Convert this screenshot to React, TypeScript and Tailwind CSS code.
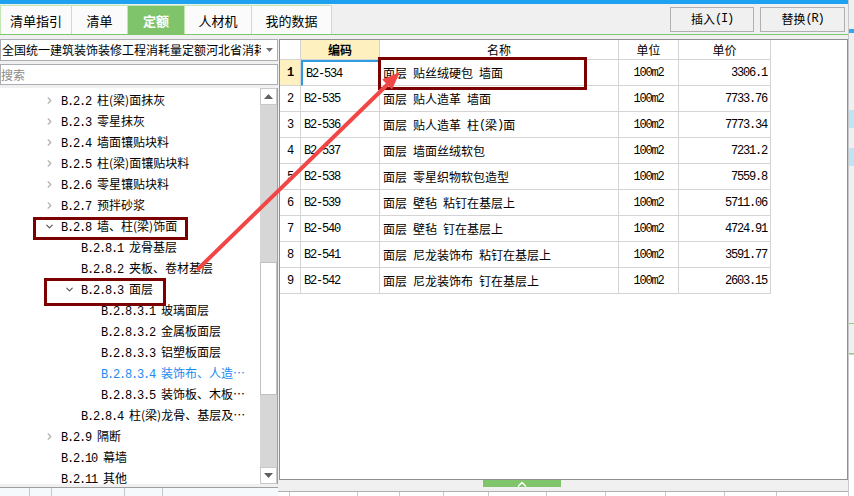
import { ChevronDown, ChevronRight } from "lucide-react"

interface Node {
  lvl: number
  code: string
  name: string
  arrow?: "right" | "down"
  active?: boolean
}

const tree: Node[] = [
  { lvl: 1, code: "B.2.2", name: "柱(梁)面抹灰", arrow: "right" },
  { lvl: 1, code: "B.2.3", name: "零星抹灰", arrow: "right" },
  { lvl: 1, code: "B.2.4", name: "墙面镶贴块料", arrow: "right" },
  { lvl: 1, code: "B.2.5", name: "柱(梁)面镶贴块料", arrow: "right" },
  { lvl: 1, code: "B.2.6", name: "零星镶贴块料", arrow: "right" },
  { lvl: 1, code: "B.2.7", name: "预拌砂浆", arrow: "right" },
  { lvl: 1, code: "B.2.8", name: "墙、柱(梁)饰面", arrow: "down" },
  { lvl: 2, code: "B.2.8.1", name: "龙骨基层" },
  { lvl: 2, code: "B.2.8.2", name: "夹板、卷材基层" },
  { lvl: 2, code: "B.2.8.3", name: "面层", arrow: "down" },
  { lvl: 3, code: "B.2.8.3.1", name: "玻璃面层" },
  { lvl: 3, code: "B.2.8.3.2", name: "金属板面层" },
  { lvl: 3, code: "B.2.8.3.3", name: "铝塑板面层" },
  { lvl: 3, code: "B.2.8.3.4", name: "装饰布、人造…", active: true },
  { lvl: 3, code: "B.2.8.3.5", name: "装饰板、木板…" },
  { lvl: 2, code: "B.2.8.4", name: "柱(梁)龙骨、基层及…" },
  { lvl: 1, code: "B.2.9", name: "隔断", arrow: "right" },
  { lvl: 1, code: "B.2.10", name: "幕墙" },
  { lvl: 1, code: "B.2.11", name: "其他" },
]

const rows = [
  ["B2-534", "面层 贴丝绒硬包 墙面", "100m2", "3306.1"],
  ["B2-535", "面层 贴人造革 墙面", "100m2", "7733.76"],
  ["B2-536", "面层 贴人造革 柱(梁)面", "100m2", "7773.34"],
  ["B2-537", "面层 墙面丝绒软包", "100m2", "7231.2"],
  ["B2-538", "面层 零星织物软包造型", "100m2", "7559.8"],
  ["B2-539", "面层 壁毡 粘钉在基层上", "100m2", "5711.06"],
  ["B2-540", "面层 壁毡 钉在基层上", "100m2", "4724.91"],
  ["B2-541", "面层 尼龙装饰布 粘钉在基层上", "100m2", "3591.77"],
  ["B2-542", "面层 尼龙装饰布 钉在基层上", "100m2", "2603.15"],
]

const tabs = ["清单指引", "清单", "定额", "人材机", "我的数据"]
const tabW = ["w-[72px]", "w-[56px]", "w-[57px]", "w-[67px]", "w-[80px]"]

// ascii runs get a narrow mono face so they sit at half the width of a CJK glyph
function T({ s }: { s: string }) {
  const parts = s.match(/[\x20-\x7e]+|[^\x20-\x7e]+/g) || []
  return (
    <>
      {parts.map((p, i) =>
        /[\x20-\x7e]/.test(p[0]) ? (
          <span key={i} className="font-['Liberation_Mono',monospace] text-[12px] tracking-[-1.2px] whitespace-pre">
            {p}
          </span>
        ) : (
          <span key={i}>{p}</span>
        )
      )}
    </>
  )
}

function Tri({ up }: { up?: boolean }) {
  return (
    <svg width="9" height="5" viewBox="0 0 9 5">
      <polygon points={up ? "0,5 9,5 4.5,0" : "0,0 9,0 4.5,5"} fill="#606060" />
    </svg>
  )
}

export default function App() {
  return (
    <div className="relative w-[854px] h-[496px] overflow-hidden bg-[#f0f0f0] flex font-['Noto_Sans_CJK_SC',sans-serif] text-[12px] leading-none text-black">
      <div className="w-[848px] flex flex-col">
        {/* top accent */}
        <div className="h-[4px] bg-[#1ea1ee]" />

        {/* tabs + buttons */}
        <div className="h-[31px] flex items-stretch border-b border-[#7fc56a] pt-[1px]">
          {tabs.map((t, i) => (
            <div
              key={t}
              className={`${tabW[i]} flex items-center justify-center text-[13px] border-t border-r border-[#c2e6b4] ${i === 0 ? "border-l" : ""} ${
                i === 2 ? "bg-[#7fc46a] text-white font-bold" : "bg-[#fbfbfb]"
              }`}
            >
              {t}
            </div>
          ))}
          <div className="ml-auto flex items-center gap-[6px] pr-[3px] pb-[1px]">
            <div className="w-[84px] h-[25px] border border-[#b0b0b0] bg-[#f0f0f0] flex items-center justify-center">
              <T s="插入(I)" />
            </div>
            <div className="w-[85px] h-[25px] border border-[#b0b0b0] bg-[#f0f0f0] flex items-center justify-center">
              <T s="替换(R)" />
            </div>
          </div>
        </div>

        <div className="h-[452px] flex">
          {/* left panel */}
          <div className="w-[278px] flex flex-col pt-[4px]">
            <div className="h-[22px] bg-white border border-[#abadb3] flex items-center">
              <div className="flex-1 overflow-hidden whitespace-nowrap pl-[1px]">全国统一建筑装饰装修工程消耗量定额河北省消耗</div>
              <div className="w-[16px] flex justify-center">
                <svg width="7" height="4" viewBox="0 0 7 4">
                  <polygon points="0,0 7,0 3.5,4" fill="#707070" />
                </svg>
              </div>
            </div>
            <div className="mt-[3px] h-[21px] bg-white border border-[#abadb3] flex items-center text-[#8a8a8a]">搜索</div>
            <div className="mt-[3px] h-[396px] bg-white flex border-r border-[#a0a0a0]">
              <div className="flex-1 overflow-hidden pt-[2px]">
                {tree.map((n) => (
                  <div key={n.code} className="h-[21px] flex items-center whitespace-nowrap">
                    <div className={n.lvl === 1 ? "w-[44px]" : n.lvl === 2 ? "w-[64px]" : "w-[84px]"} />
                    <div className="w-[17px] flex items-center">
                      {n.arrow === "right" && <ChevronRight size={11} strokeWidth={2.5} color="#b0b0b0" />}
                      {n.arrow === "down" && <ChevronDown size={11} strokeWidth={2.5} color="#555555" />}
                    </div>
                    <div className={n.active ? "text-[#1a8cf0]" : ""}>
                      <T s={`${n.code} `} />
                      {n.name}
                    </div>
                  </div>
                ))}
              </div>
              {/* scrollbar */}
              <div className="w-[17px] flex flex-col bg-[#d6d6d6]">
                <div className="h-[17px] bg-white border border-[#c8c8c8] flex items-center justify-center">
                  <Tri up />
                </div>
                <div className="flex-1">
                  <div className="mt-[157px] h-[133px] bg-white border border-[#c0c0c0]" />
                </div>
                <div className="h-[17px] bg-white border border-[#c8c8c8] flex items-center justify-center">
                  <Tri />
                </div>
              </div>
            </div>
          </div>

          {/* table panel */}
          <div className="ml-[1px] w-[569px] flex flex-col pt-[4px]">
            <div className="h-[441px] bg-white border border-[#8f8f8f]">
              <div className="grid grid-cols-[21px_79px_239px_60px_92px] w-[491px]">
                <div className="h-[20px] border-r border-b border-[#d4d4d4]" />
                <div className="h-[20px] border-r border-b border-[#d4d4d4] bg-[#fff0c0] font-bold flex items-center justify-center">编码</div>
                <div className="h-[20px] border-r border-b border-[#d4d4d4] flex items-center justify-center">名称</div>
                <div className="h-[20px] border-r border-b border-[#d4d4d4] flex items-center justify-center">单位</div>
                <div className="h-[20px] border-r border-b border-[#d4d4d4] flex items-center justify-center">单价</div>
                {rows.map((r, i) => (
                  <div key={r[0]} className="contents">
                    <div
                      className={`h-[26px] border-r border-b border-[#d4d4d4] flex items-center justify-center ${
                        i === 0 ? "bg-[#fff0c0] font-bold" : ""
                      }`}
                    >
                      <T s={String(i + 1)} />
                    </div>
                    <div
                      className={`h-[26px] border-r border-b border-[#d4d4d4] flex items-center pl-[3px] ${
                        i === 0 ? "border-l-2 border-t-2 border-l-[#2f9be0] border-t-[#2f9be0]" : ""
                      }`}
                    >
                      <T s={r[0]} />
                    </div>
                    <div className="h-[26px] border-r border-b border-[#d4d4d4] flex items-center pl-[3px] whitespace-nowrap">
                      <T s={r[1]} />
                    </div>
                    <div className="h-[26px] border-r border-b border-[#d4d4d4] flex items-center justify-center">
                      <T s={r[2]} />
                    </div>
                    <div className="h-[26px] border-r border-b border-[#d4d4d4] flex items-center justify-end pr-[3px]">
                      <T s={r[3]} />
                    </div>
                  </div>
                ))}
              </div>
            </div>
            <div className="h-[7px] flex">
              <div className="ml-[204px] w-[78px] bg-[#80c46c] flex items-end justify-center">
                <svg width="10" height="6" viewBox="0 0 10 6">
                  <polyline points="1,5.5 5,1.5 9,5.5" fill="none" stroke="#ffffff" strokeWidth="1.5" />
                </svg>
              </div>
            </div>
          </div>
        </div>

        {/* bottom strip of the next grid */}
        <div className="h-[9px] flex">
          <div className="w-[278px] border-t border-[#a0a0a0] bg-[#f5f9fc] flex">
            <div className="w-[30px] border-r border-[#c8c8c8]" />
            <div className="w-[22px] border-r border-[#c8c8c8]" />
            <div className="w-[73px] border-r border-[#c8c8c8]" />
            <div className="w-[38px] border-r border-[#c8c8c8]" />
          </div>
          <div className="flex-1 flex flex-col">
            <div className="h-[4px]" />
            <div className="flex-1 border-t border-[#b0b0b0] bg-white flex">
              <div className="w-[12px] border-r border-[#c8c8c8]" />
              <div className="w-[68px] border-r border-[#c8c8c8]" />
              <div className="w-[42px] border-r border-[#c8c8c8]" />
              <div className="w-[44px] border-r border-[#c8c8c8]" />
              <div className="w-[45px] border-r border-[#c8c8c8]" />
              <div className="w-[58px] border-r border-[#c8c8c8]" />
              <div className="w-[59px] border-r border-[#c8c8c8]" />
              <div className="w-[60px] border-r border-[#c8c8c8]" />
              <div className="w-[59px] border-r border-[#c8c8c8]" />
              <div className="w-[52px] border-r border-[#c8c8c8]" />
            </div>
          </div>
        </div>
      </div>

      {/* sliver of the neighbouring panel */}
      <div className="w-[6px] flex flex-col border-l border-[#c8c8c8]">
        <div className="h-[29px]" />
        <div className="h-[4px] bg-[#33a8ee]" />
        <div className="h-[77px]" />
        <div className="h-[18px] bg-[#bfe4f4]" />
        <div className="h-[20px]" />
        <div className="h-[18px] bg-[#bfe4f4]" />
        <div className="h-[157px]" />
        <div className="h-[1px] bg-[#8fd07a]" />
        <div className="h-[29px]" />
        <div className="h-[1px] bg-[#8fd07a]" />
        <div className="flex-1 bg-white border-t border-[#d0d0d0]" />
      </div>

      {/* annotations drawn over the screenshot */}
      <div className="absolute left-[33px] top-[217px] w-[155px] h-[23px] border-[3px] border-[#7d0000]" />
      <div className="absolute left-[44px] top-[278px] w-[122px] h-[28px] border-[3px] border-[#7d0000]" />
      <div className="absolute left-[378px] top-[57px] w-[209px] h-[33px] border-[3px] border-[#7d0000]" />
      <svg className="absolute left-0 top-0 pointer-events-none" width="854" height="496">
        <line x1="197" y1="270" x2="388" y2="84" stroke="#f24646" strokeWidth="4" />
        <polygon points="400,72 392,89.6 382.2,79.6" fill="#f24646" />
      </svg>
    </div>
  )
}
